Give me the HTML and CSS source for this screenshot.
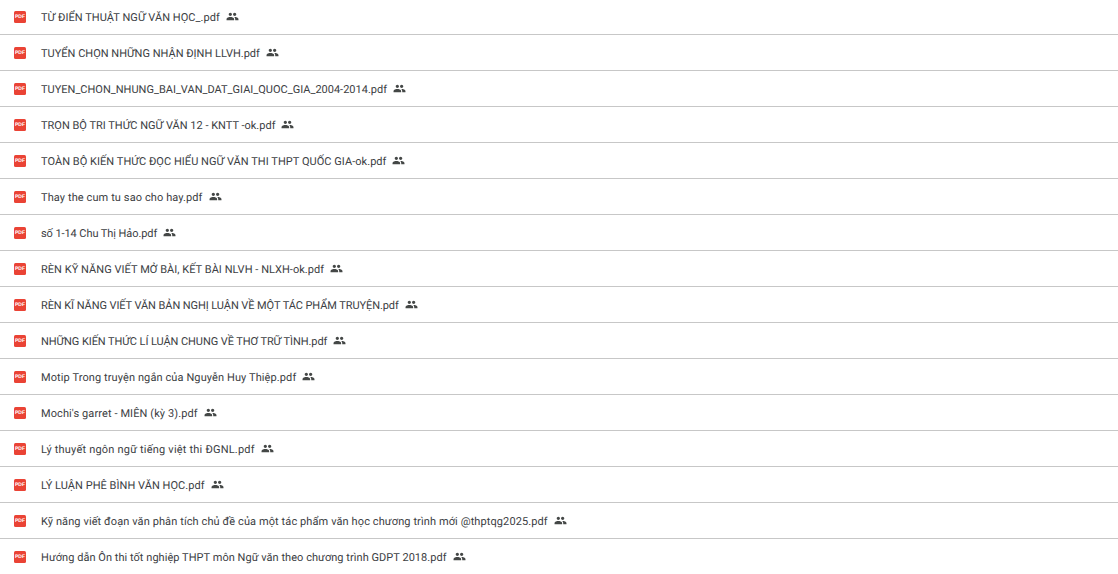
FILE: index.html
```html
<!DOCTYPE html>
<html lang="vi">
<head>
    <meta charset="UTF-8">
    <title>Drive files</title>
    <link rel="stylesheet" href="styles.css">
</head>
<body>
    <svg class="defs" width="0" height="0">
        <symbol id="people" viewBox="0 0 24 24">
            <path fill="#444746" d="M16 11c1.66 0 2.99-1.34 2.99-3S17.66 5 16 5s-3 1.34-3 3 1.34 3 3 3zm-8 0c1.66 0 2.99-1.34 2.99-3S9.66 5 8 5 5 6.34 5 8s1.34 3 3 3zm0 2c-2.33 0-7 1.17-7 3.5V19h14v-2.5C15 14.17 10.33 13 8 13zm8 0c-.29 0-.62.02-.97.05 1.16.84 1.97 1.97 1.97 3.45V19h6v-2.5c0-2.33-4.67-3.5-7-3.5z"/>
        </symbol>
    </svg>
    <ul class="file-list">
        <li class="file-row"><span class="file-icon">PDF</span><span class="file-name slight">TỪ ĐIỂN THUẬT NGỮ VĂN HỌC_.pdf</span><svg class="shared-icon"><use href="#people"/></svg></li>
        <li class="file-row"><span class="file-icon">PDF</span><span class="file-name">TUYỂN CHỌN NHỮNG NHẬN ĐỊNH LLVH.pdf</span><svg class="shared-icon"><use href="#people"/></svg></li>
        <li class="file-row"><span class="file-icon">PDF</span><span class="file-name">TUYEN_CHON_NHUNG_BAI_VAN_DAT_GIAI_QUOC_GIA_2004-2014.pdf</span><svg class="shared-icon"><use href="#people"/></svg></li>
        <li class="file-row"><span class="file-icon">PDF</span><span class="file-name">TRỌN BỘ TRI THỨC NGỮ VĂN 12 - KNTT -ok.pdf</span><svg class="shared-icon"><use href="#people"/></svg></li>
        <li class="file-row"><span class="file-icon">PDF</span><span class="file-name slight">TOÀN BỘ KIẾN THỨC ĐỌC HIỂU NGỮ VĂN THI THPT QUỐC GIA-ok.pdf</span><svg class="shared-icon"><use href="#people"/></svg></li>
        <li class="file-row"><span class="file-icon">PDF</span><span class="file-name loose">Thay the cum tu sao cho hay.pdf</span><svg class="shared-icon"><use href="#people"/></svg></li>
        <li class="file-row"><span class="file-icon">PDF</span><span class="file-name tight">số 1-14 Chu Thị Hảo.pdf</span><svg class="shared-icon"><use href="#people"/></svg></li>
        <li class="file-row"><span class="file-icon">PDF</span><span class="file-name slight">RÈN KỸ NĂNG VIẾT MỞ BÀI, KẾT BÀI NLVH - NLXH-ok.pdf</span><svg class="shared-icon"><use href="#people"/></svg></li>
        <li class="file-row"><span class="file-icon">PDF</span><span class="file-name tight">RÈN KĨ NĂNG VIẾT VĂN BẢN NGHỊ LUẬN VỀ MỘT TÁC PHẨM TRUYỆN.pdf</span><svg class="shared-icon"><use href="#people"/></svg></li>
        <li class="file-row"><span class="file-icon">PDF</span><span class="file-name tight">NHỮNG KIẾN THỨC LÍ LUẬN CHUNG VỀ THƠ TRỮ TÌNH.pdf</span><svg class="shared-icon"><use href="#people"/></svg></li>
        <li class="file-row"><span class="file-icon">PDF</span><span class="file-name loose">Motip Trong truyện ngắn của Nguyễn Huy Thiệp.pdf</span><svg class="shared-icon"><use href="#people"/></svg></li>
        <li class="file-row"><span class="file-icon">PDF</span><span class="file-name loose">Mochi's garret - MIÊN (kỳ 3).pdf</span><svg class="shared-icon"><use href="#people"/></svg></li>
        <li class="file-row"><span class="file-icon">PDF</span><span class="file-name looser">Lý thuyết ngôn ngữ tiếng việt thi ĐGNL.pdf</span><svg class="shared-icon"><use href="#people"/></svg></li>
        <li class="file-row"><span class="file-icon">PDF</span><span class="file-name slight">LÝ LUẬN PHÊ BÌNH VĂN HỌC.pdf</span><svg class="shared-icon"><use href="#people"/></svg></li>
        <li class="file-row"><span class="file-icon">PDF</span><span class="file-name loose">Kỹ năng viết đoạn văn phân tích chủ đề của một tác phẩm văn học chương trình mới @thptqg2025.pdf</span><svg class="shared-icon"><use href="#people"/></svg></li>
        <li class="file-row"><span class="file-icon">PDF</span><span class="file-name slight">Hướng dẫn Ôn thi tốt nghiệp THPT môn Ngữ văn theo chương trình GDPT 2018.pdf</span><svg class="shared-icon"><use href="#people"/></svg></li>
    </ul>
</body>
</html>
```

FILE: styles.css
```css
html, body {
    height: 574px;
    overflow: hidden;
}
body {
    margin: 0;
    background-color: #fff;
    font-family: Roboto, Inter, "Noto Sans", sans-serif;
    font-size: 11px;
    text-rendering: geometricPrecision;
    color: #3c4043;
}
.defs {
    display: block;
    height: 0;
}
.file-list {
    list-style: none;
    margin: -1px 0 0;
    padding: 0;
}
.file-row {
    display: flex;
    align-items: center;
    height: 35px;
    border-bottom: 1px solid #c7c7c7;
    padding-left: 14px;
}
.file-row:last-child {
    border-bottom: none;
}
.file-icon {
    display: flex;
    align-items: center;
    justify-content: center;
    flex: none;
    width: 12px;
    height: 12px;
    border-radius: 1.5px;
    background-color: #ea4335;
    color: #fff;
    font-family: "Liberation Sans", sans-serif;
    font-size: 5px;
    font-weight: 700;
}
.file-name {
    margin-left: 15px;
    padding-top: 2px;
    white-space: nowrap;
}
/* the original font runs a little wider or narrower depending on the name */
.file-name.tight {
    letter-spacing: -0.08px;
}
.file-name.slight {
    letter-spacing: 0.04px;
}
.file-name.loose {
    letter-spacing: 0.1px;
}
.file-name.looser {
    letter-spacing: 0.2px;
}
.shared-icon {
    width: 13px;
    height: 13px;
    margin-left: 6px;
    margin-top: -1px;
    flex: none;
}
```
